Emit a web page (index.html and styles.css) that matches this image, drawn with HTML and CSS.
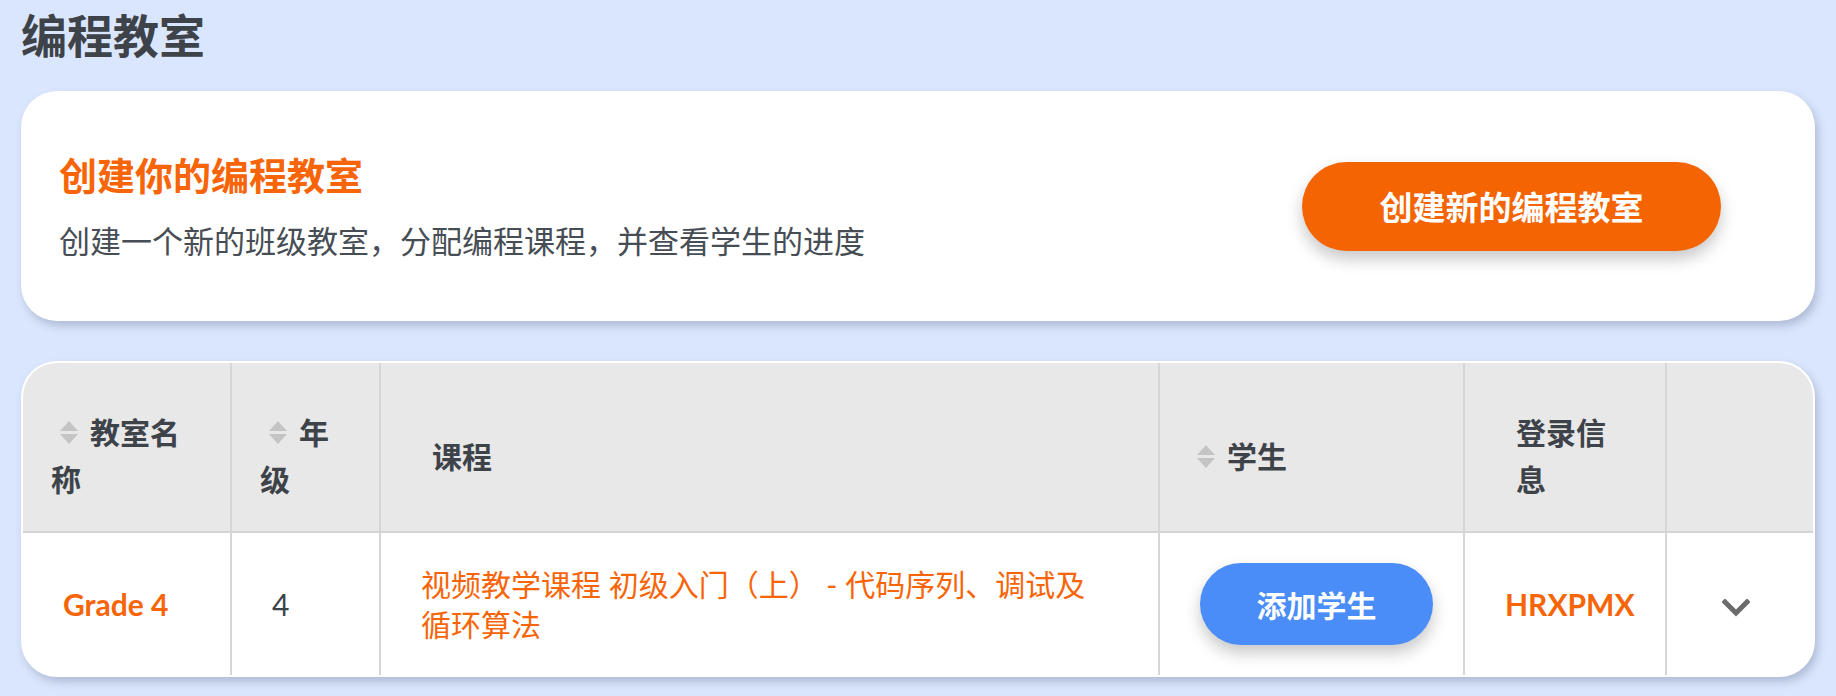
FILE: index.html
```html
<!DOCTYPE html>
<html lang="zh-CN">
<head>
    <meta charset="UTF-8">
    <meta name="viewport" content="width=device-width, initial-scale=1.0">
    <title>编程教室</title>
    <link rel="stylesheet" href="styles.css">
</head>
<body>
    <div class="page">
        <h1 class="page-title">编程教室</h1>

        <div class="create-card">
            <div class="create-text">
                <h2>创建你的编程教室</h2>
                <p>创建一个新的班级教室，分配编程课程，并查看学生的进度</p>
            </div>
            <button type="button" class="btn-create">创建新的编程教室</button>
        </div>

        <div class="table-card">
            <table class="class-table">
                <colgroup>
                    <col class="c-name">
                    <col class="c-grade">
                    <col class="c-course">
                    <col class="c-students">
                    <col class="c-login">
                    <col class="c-more">
                </colgroup>
                <thead>
                    <tr>
                        <th><span class="sort"></span>教室名称</th>
                        <th><span class="sort"></span>年级</th>
                        <th class="plain">课程</th>
                        <th><span class="sort"></span>学生</th>
                        <th class="plain">登录信息</th>
                        <th></th>
                    </tr>
                </thead>
                <tbody>
                    <tr>
                        <td class="link">Grade 4</td>
                        <td>4</td>
                        <td class="course">视频教学课程 初级入门（上） - 代码序列、调试及循环算法</td>
                        <td><button type="button" class="btn-add">添加学生</button></td>
                        <td class="link">HRXPMX</td>
                        <td class="more">
                            <svg width="28" height="18" viewBox="0 0 28 18">
                                <path d="M3 3 L14 14 L25 3" fill="none" stroke="#6b6b6b" stroke-width="5" stroke-linecap="square"/>
                            </svg>
                        </td>
                    </tr>
                </tbody>
            </table>
        </div>
    </div>
</body>
</html>
```

FILE: styles.css
```css
*{
    margin: 0px;
    padding: 0px;
    box-sizing: border-box;
}

body{
    background-color: #dae6fd;
    font-family: "Lato", "Noto Sans CJK SC", sans-serif;
    color: #3d4349;
}

.page{
    padding: 8px 21px 19px 21px;
}

.page-title{
    font-size: 46px;
    line-height: 56px;
    font-weight: 700;
    color: #3d4349;
    margin-bottom: 27px;
}

/* create card */
.create-card{
    height: 230px;
    background-color: #fff;
    border-radius: 36px;
    display: flex;
    align-items: center;
    justify-content: space-between;
    padding: 0px 94px 0px 38px;
    box-shadow: 3px 5px 8px rgba(70, 80, 110, 0.28);
}
.create-text h2{
    font-size: 38px;
    line-height: 46px;
    font-weight: 700;
    color: #f76508;
    margin-bottom: 23px;
}
.create-text p{
    font-size: 31px;
    line-height: 40px;
    color: #474d54;
}
.btn-create{
    width: 419px;
    height: 89px;
    border: none;
    border-radius: 45px;
    background-color: #f56402;
    color: #fff;
    font-family: inherit;
    font-size: 33px;
    font-weight: 700;
    box-shadow: 0px 8px 16px rgba(0, 0, 0, 0.22);
}

/* table card */
.table-card{
    margin-top: 40px;
    background-color: #fff;
    border: 2px solid #fff;
    border-radius: 36px;
    overflow: hidden;
    box-shadow: 3px 5px 8px rgba(70, 80, 110, 0.28);
}
.class-table{
    width: 100%;
    border-collapse: collapse;
    table-layout: fixed;
}
.c-name{ width: 208px; }
.c-grade{ width: 149px; }
.c-course{ width: 779px; }
.c-students{ width: 305px; }
.c-login{ width: 202px; }

.class-table th,
.class-table td{
    border-right: 2px solid #d6d6d6;
    text-align: left;
    vertical-align: middle;
}
.class-table th:last-child,
.class-table td:last-child{
    border-right: none;
}
.class-table th{
    background-color: #e8e8e8;
    font-size: 30px;
    line-height: 47px;
    font-weight: 700;
    color: #3d4349;
    padding: 46px 30px 28px 28px;
    border-bottom: 2px solid #d4d4d4;
}
.class-table th.plain{
    padding-left: 51px;
}
.sort{
    display: inline-block;
    width: 36px;
    height: 26px;
    margin-right: 3px;
    vertical-align: -2px;
    position: relative;
}
.sort::before,
.sort::after{
    content: "";
    position: absolute;
    left: 9px;
    border-left: 9px solid transparent;
    border-right: 9px solid transparent;
}
.sort::before{
    top: 1px;
    border-bottom: 10px solid #c4c4c4;
}
.sort::after{
    top: 14px;
    border-top: 10px solid #c4c4c4;
}

.class-table td{
    font-size: 30px;
    line-height: 40px;
    padding: 30px 40px 30px 40px;
    color: #3d4349;
}
.class-table td.link{
    color: #f76508;
    font-weight: 700;
}
.class-table td.course{
    color: #f76508;
    padding-right: 62px;
}
.class-table td.more{
    text-align: center;
    padding: 0px;
}
.more svg{
    display: inline-block;
    vertical-align: middle;
    margin-right: 8px;
}
.btn-add{
    width: 233px;
    height: 82px;
    border: none;
    border-radius: 41px;
    background-color: #4b8df8;
    color: #fff;
    font-family: inherit;
    font-size: 30px;
    font-weight: 700;
    box-shadow: 0px 8px 16px rgba(0, 0, 0, 0.22);
    display: block;
}
```
